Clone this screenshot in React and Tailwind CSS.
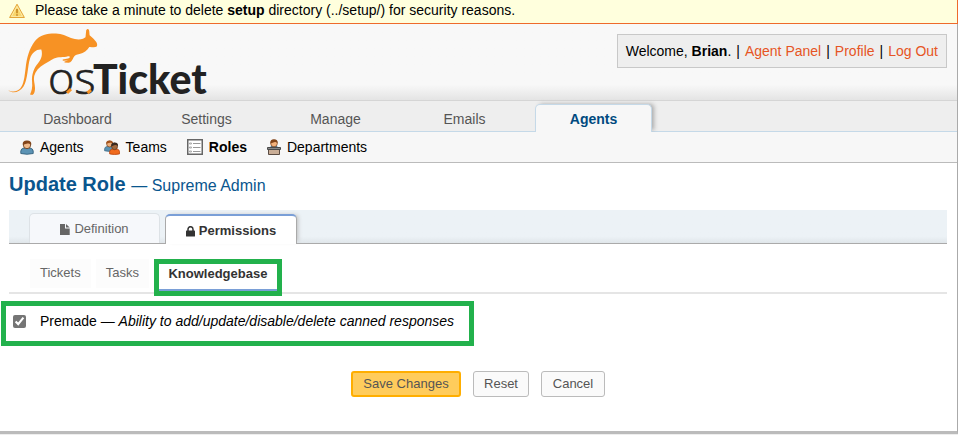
import React from "react";

function WarningIcon() {
  return (
    <svg width="16" height="16" viewBox="0 0 16 16" aria-hidden="true">
      <path d="M8 1.2 L15.4 14.5 H.6 Z" fill="#f8d56c" stroke="#e3a53a" strokeLinejoin="round" />
      <path d="M8 3.4 L13.6 13.4 H2.4 Z" fill="none" stroke="#fdf0b8" strokeWidth=".8" />
      <path d="M8 6v4.2M8 11.2v1.5" stroke="#c98f2b" strokeWidth="1.8" />
    </svg>
  );
}

function Logo() {
  return (
    <svg width="212" height="72" viewBox="8 27 212 72" overflow="visible" role="img" aria-label="osTicket">
      <path
        d="M8.3 90.2 C12 92.4 17 92 20.2 88.5 C23.7 84.5 24.5 77 25.5 69 C26.8 57 29.5 48 35 41 C40 35 48 33.4 56 33.6 C62 34 66 36 71 38 C75 39.5 79.5 40 83 38.8 L85.5 37.3 L86.2 30.2 C87.5 28 89 28.8 89.2 31 L89.6 35.3 C91.5 37 93.5 38.5 95 40.5 C97 42.5 98 45 96.5 46.8 C94 47.8 91.5 46.8 89.3 47 C87 50.5 84 53 79.5 54 C76.5 54.5 74.8 55.2 73.5 57.5 C72.5 60 71 62.5 68.6 62.7 L64.5 62.4 L64.5 61.4 L68 60.5 L62.8 60.7 L62.7 59.5 L68 58.6 C70.5 57.5 70.5 55.8 68 56.2 C63.5 57.7 58 56.5 54 58.5 C50 60.5 47.5 62.5 44.5 64 C39 67 35.5 71 34.2 76 C33.2 80 35 84 35 88 C35 91 34.5 94.2 32.3 95 L30 94.5 C31.5 91.5 32.7 87.5 32.1 82 C31.4 75 33.8 68 38.2 63 C41.5 59 42.8 54.5 41.3 49.5 C36.5 49 32 52.5 30 58.5 C27.5 66 28 79 23.5 86.5 C19.5 92.7 12.5 94 8.3 90.2 Z"
        fill="#f79224"
      />
      <text x="48" y="94" fontSize="45" fontWeight="300" fill="#222222" stroke="#222222" strokeWidth=".7" className="font-['Open_Sans',sans-serif]">os</text>
      <text x="93" y="94" fontSize="41" fontWeight="900" fill="#222222" className="font-['Lato',sans-serif]">Ticket</text>
      <path d="M67 92.8 L71 89.2" stroke="#f79224" strokeWidth="3" />
      <path d="M87.5 93 L91 90" stroke="#f79224" strokeWidth="3" />
    </svg>
  );
}

function Person({ shirt, hair, skin, outline }) {
  return (
    <g>
      <path d="M.8 13.5 V11 Q1 8.5 4 8 H10 Q13 8.5 13.2 11 V13.5 Q7 15 .8 13.5Z" fill={shirt} stroke={outline} strokeWidth=".9" />
      <circle cx="7" cy="5" r="3.7" fill={skin} stroke="#623413" strokeWidth=".8" />
      <path d="M2.8 5 Q2 .7 7 .5 Q12 .7 11.2 5 Q10 3 7.5 3.5 Q4.3 4.2 2.8 5Z" fill={hair} />
    </g>
  );
}

function AgentIcon() {
  return (
    <svg width="14" height="15" viewBox="0 0 14 15" aria-hidden="true">
      <Person shirt="#5c93b4" hair="#82451a" skin="#efb98a" outline="#34627e" />
    </svg>
  );
}

function TeamsIcon() {
  return (
    <svg width="16" height="15" viewBox="0 0 16 15" aria-hidden="true">
      <g transform="scale(.8)">
        <Person shirt="#5c93b4" hair="#a4531c" skin="#f0b07b" outline="#34627e" />
      </g>
      <g transform="translate(5 2) scale(.8 .88)">
        <Person shirt="#f06a1d" hair="#39291f" skin="#a0683e" outline="#b84009" />
      </g>
    </svg>
  );
}

function RolesIcon() {
  return (
    <svg width="16" height="16" viewBox="0 0 16 16" aria-hidden="true">
      <rect x=".75" y=".75" width="14.5" height="14.5" fill="#fff" stroke="#666" strokeWidth="1.5" />
      <path d="M6 4.5h7.5M6 8.5h7.5M6 12.5h7.5" stroke="#999" />
      <path d="M2.5 4h2v1h-2zM2.5 8h2v1h-2zM2.5 12h2v1h-2z" fill="#fff" stroke="#aaa" />
    </svg>
  );
}

function DepartmentIcon() {
  return (
    <svg width="14" height="16" viewBox="0 0 14 16" aria-hidden="true">
      <path d="M3 8.5 Q3.5 6.5 7 6.5 Q10.5 6.5 11 8.5Z" fill="#3c759b" />
      <circle cx="7" cy="4.5" r="3.3" fill="#f4b27b" stroke="#79401d" strokeWidth=".7" />
      <path d="M3.3 4.4 Q3 .4 7 .3 Q11 .4 10.7 4.4 Q9.5 2.7 7 3.2 Q4.8 4.3 3.3 4.4Z" fill="#82451a" />
      <path d="M1.5 10.5h11v5h-11z" fill="#c9ad96" stroke="#5a4b42" />
      <path d="M.5 8.5h13v2H.5z" fill="#888" stroke="#4b4b4b" />
    </svg>
  );
}

function FileIcon() {
  return (
    <svg width="10" height="11" viewBox="0 0 10 11" fill="currentColor" aria-hidden="true">
      <path d="M0 0h5v4.5h4.7V11H0zM6 0l3.7 3.6H6z" />
    </svg>
  );
}

function LockIcon() {
  return (
    <svg width="9" height="11" viewBox="0 0 9 11" aria-hidden="true">
      <path d="M2 5V3.2a2.5 2.5 0 0 1 5 0V5" fill="none" stroke="currentColor" strokeWidth="1.5" />
      <rect y="4.6" width="9" height="6" rx=".6" fill="currentColor" />
    </svg>
  );
}

const sections = ["Dashboard", "Settings", "Manage", "Emails", "Agents"];
const pages = [
  { name: "Agents", Icon: AgentIcon },
  { name: "Teams", Icon: TeamsIcon },
  { name: "Roles", Icon: RolesIcon },
  { name: "Departments", Icon: DepartmentIcon },
];

function Header() {
  return (
    <header className="flex h-[77px] items-start justify-between border-b border-[#d5d5d5] bg-linear-to-b from-[#f8f8f8] from-80% to-[#e4e4e4] pr-2.5 pl-2">
      <a href="#home" className="pt-[3px]"><Logo /></a>
      <div className="mt-2.5 flex gap-[5px] border border-[#c8c8c8] bg-[#eee] px-2 py-1.5 leading-5 whitespace-nowrap">
        <span>Welcome, <strong>Brian</strong>.</span>
        <span>|</span>
        <a href="#panel" className="text-[#e65524]">Agent Panel</a>
        <span>|</span>
        <a href="#profile" className="text-[#e65524]">Profile</a>
        <span>|</span>
        <a href="#logout" className="text-[#e65524]">Log Out</a>
      </div>
    </header>
  );
}

function Navigation() {
  return (
    <>
      <nav className="flex h-[31px] items-end gap-3 border-b border-[#c5d9e8] bg-[#eee] pl-[19px]">
        {sections.map((name) => (
          <a
            key={name}
            href={"#" + name}
            className={
              name === "Agents"
                ? "-mb-px h-7 w-[117px] rounded-t-[5px] border border-b-0 border-[#c5d9e8] bg-[#f7f7f7] text-center leading-[29px] font-bold text-[#004a80] shadow-[3px_-1px_4px_-1px_#aaa]"
                : "h-7 w-[117px] pt-px text-center leading-[30px] text-[#555]"
            }
          >
            {name}
          </a>
        ))}
      </nav>
      <nav className="relative flex h-[31px] items-center gap-5 border-b border-[#bbb] bg-[#f7f7f7] pl-5">
        {pages.map(({ name, Icon }) => (
          <a key={name} href={"#" + name} className={name === "Roles" ? "flex items-center gap-1.5 font-bold" : "flex items-center gap-1.5"}>
            <Icon />
            {name}
          </a>
        ))}
      </nav>
    </>
  );
}

export default function App() {
  return (
    <div className="border-b border-[#eee] bg-white font-['Liberation_Sans',Arial,sans-serif] text-sm text-black">
      <div className="flex h-6 items-start gap-2.5 border-r border-b border-[#ee6a2c] bg-[#ffffdd] pl-[9px] leading-5">
        <span className="pt-[3px]"><WarningIcon /></span>
        <p>Please take a minute to delete <strong>setup</strong> directory (../setup/) for security reasons.</p>
      </div>
      <div className="border-r border-b-3 border-r-[#aaa] border-b-[#bbb]">
        <Header />
        <Navigation />
        <main className="px-2.5 pb-[34px] pl-[9px]">
          <h2 className="pt-1.5 text-xl leading-[30px] font-bold text-[#0a568e]">
            Update Role <small className="text-base font-normal">— Supreme Admin</small>
          </h2>
          <div role="tablist" className="mt-[11px] flex h-[34px] items-end gap-[5px] border-b border-[#aaa] bg-linear-to-b from-[#ecf2f6] from-80% to-[#e0e6ea] pl-5 text-[13px]">
            <button type="button" role="tab" aria-selected="false" className="flex h-[30px] w-[131px] items-center justify-center gap-1 rounded-t-[5px] border border-b-0 border-[#dde2e6] bg-[#f6f8fb] pt-px text-[#666]">
              <FileIcon />Definition
            </button>
            <button type="button" role="tab" aria-selected="true" className="-mb-px flex h-[30px] w-[132px] items-center justify-center gap-1 rounded-t-[5px] border border-t-2 border-b-0 border-[#aaa] border-t-[#7a9fd7] bg-white pt-0.5 font-bold text-[#333] shadow-[3px_-1px_4px_-2px_#bbb]">
              <LockIcon />Permissions
            </button>
          </div>
          <div role="tablist" className="mt-[15px] flex h-[35px] items-start gap-[5px] border-b-2 border-[#e5e5e5] pl-[21px] text-[13px]">
            <button type="button" role="tab" aria-selected="false" className="h-[29px] bg-[#fcfcfc] px-2.5 text-[#666]">Tickets</button>
            <button type="button" role="tab" aria-selected="false" className="h-[29px] bg-[#fcfcfc] px-2.5 text-[#666]">Tasks</button>
            <div className="relative">
              <button type="button" role="tab" aria-selected="true" className="h-8 w-32 border-b-2 border-[#7a9fd7] bg-white font-bold text-[#333]">Knowledgebase</button>
              <span className="pointer-events-none absolute inset-x-0 top-0 h-[37px] border-5 border-[#22b14c]" />
            </div>
          </div>
          <div className="mt-[7px] -ml-2 flex h-[45px] w-[473px] items-center border-5 border-[#22b14c] pb-1 pl-[7px]">
            <input id="premade" type="checkbox" defaultChecked className="size-[13px] accent-[#757575]" />
            <label htmlFor="premade" className="pb-px pl-3.5 whitespace-nowrap">Premade — <em>Ability to add/update/disable/delete canned responses</em></label>
          </div>
          <div className="mt-[25px] flex justify-center gap-3 text-[13px] text-[#555]">
            <button type="button" className="h-[26px] w-[110px] rounded-[3px] border-2 border-[#ffae00] bg-[#ffcc5c]">Save Changes</button>
            <button type="button" className="h-[26px] w-14 rounded-[3px] border border-[#bbb] bg-[#fafafa]">Reset</button>
            <button type="button" className="h-[26px] w-16 rounded-[3px] border border-[#bbb] bg-[#fafafa]">Cancel</button>
          </div>
        </main>
      </div>
    </div>
  );
}
